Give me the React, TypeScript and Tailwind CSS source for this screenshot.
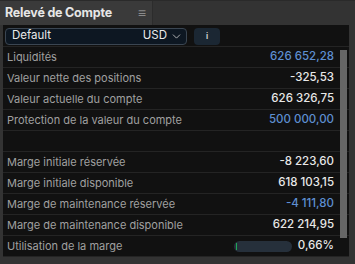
import { ChevronDown } from 'lucide-react';

type Row = { label: string; value?: string; tone?: 'blue' | 'white'; bar?: number };

const rows: Row[] = [
  { label: 'Liquidités', value: '626 652,28', tone: 'blue' },
  { label: 'Valeur nette des positions', value: '-325,53' },
  { label: 'Valeur actuelle du compte', value: '626 326,75' },
  { label: 'Protection de la valeur du compte', value: '500 000,00', tone: 'blue' },
  { label: '' },
  { label: 'Marge initiale réservée', value: '-8 223,60' },
  { label: 'Marge initiale disponible', value: '618 103,15' },
  { label: 'Marge de maintenance réservée', value: '-4 111,80', tone: 'blue' },
  { label: 'Marge de maintenance disponible', value: '622 214,95' },
  { label: 'Utilisation de la marge', value: '0,66%', bar: 0.66 },
];

export default function App() {
  return (
    <div className="w-[355px] h-[264px] bg-[#333333] flex flex-col overflow-hidden font-['Inter',sans-serif]">
      <div className="h-[25px] flex items-stretch border-t border-[#2a2a2a]">
        <div className="w-[152px] flex items-center justify-between pl-[5px] pr-[6px] bg-[#3a3a3a]">
          <span className="text-[12.5px] font-bold text-[#e6e6e6] tracking-[-0.2px]">Relevé de Compte</span>
          <span className="text-[#8a8a8a] text-[14px] leading-none">≡</span>
        </div>
        <div className="flex-1 border-l border-[#2c2c2c] bg-[#333333]" />
      </div>
      <div className="flex-1 ml-[3px] mr-[6px] mb-[7px] bg-[#111111] flex flex-col relative">
        <div className="flex items-center gap-[7px] px-[2px] pt-[1px] h-[22px] border-b border-[#242424]">
          <div className="w-[182px] h-[17px] rounded-[4px] border border-[#3b4652] bg-[#0d1722] flex items-center justify-between pl-[6px] pr-[3px] text-[11.5px] text-[#eaeaea]">
            <span>Default</span>
            <span className="flex items-center gap-[3px]">
              USD
              <ChevronDown size={13} strokeWidth={1.5} className="text-[#cfcfcf]" />
            </span>
          </div>
          <div className="w-[26px] h-[17px] rounded-[4px] bg-[#1b2733] flex items-center justify-center text-[8px] font-bold text-[#cfcfcf]">
            i
          </div>
        </div>
        <div className="flex flex-col">
          {rows.map((r, i) => (
            <div
              key={i}
              className="h-[21px] flex items-center justify-between pl-[4px] pr-[15px] border-b border-[#242424] text-[11px]"
            >
              <span className="text-[#a0a0a0]">{r.label}</span>
              {r.value && (
                <span className="flex items-center gap-[6px]">
                  {r.bar !== undefined && (
                    <span className="w-[58px] h-[11px] rounded-full bg-[#26303b] flex items-center px-[2px]">
                      <span className="w-[1px] h-[7px] bg-[#1fa855]" />
                    </span>
                  )}
                  <span className={`text-[11.5px] font-medium ${r.tone === 'blue' ? 'text-[#5e8fd1]' : 'text-[#e8e8e8]'}`}>
                    {r.value}
                  </span>
                </span>
              )}
            </div>
          ))}
        </div>
        <div className="absolute right-[2px] top-[25px] w-[7px] h-[188px] bg-[#666666]" />
      </div>
    </div>
  );
}
